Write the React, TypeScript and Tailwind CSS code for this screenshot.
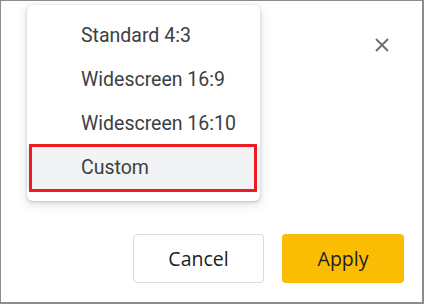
const sizes = ["Standard 4:3", "Widescreen 16:9", "Widescreen 16:10", "Custom"];

export default function App() {
  return (
    <div className="relative flex h-[304px] w-[424px] flex-col border-t border-l border-r-2 border-b-2 border-[#8c8c8c] bg-white font-['Roboto',sans-serif]">
      <div className="flex items-start justify-between">
        <div className="ml-[26px] mt-[4px] w-[233px] rounded-[6px] bg-white pt-[9px] pb-[11px] shadow-[0_1px_3px_rgba(60,64,67,0.25),0_3px_8px_2px_rgba(60,64,67,0.12)]">
          {sizes.map((s) => (
            <div
              key={s}
              className={
                s === "Custom"
                  ? "relative flex h-[44px] items-center bg-[#f1f3f4] pl-[54px] text-[19.5px] text-[#3c4043]"
                  : "flex h-[44px] items-center pl-[54px] text-[19.5px] text-[#3c4043]"
              }
            >
              {s}
              {s === "Custom" && (
                <div className="pointer-events-none absolute top-[-2px] right-[3px] bottom-[-2px] left-[2px] border-[3px] border-[#ed1c24]" />
              )}
            </div>
          ))}
        </div>
        <button type="button" className="mt-[32px] mr-[28px] flex h-[24px] w-[24px] items-center justify-center text-[#6b6b6b]">
          <svg width="14" height="14" viewBox="0 0 14 14" fill="none" stroke="currentColor" strokeWidth="1.8">
            <path d="M1 1L13 13M13 1L1 13" />
          </svg>
        </button>
      </div>
      <div className="mt-auto mb-[19px] mr-[18px] flex justify-end gap-[18px] font-['Open_Sans',sans-serif]">
        <button
          type="button"
          className="h-[49px] w-[131px] rounded-[4px] border border-[#dadce0] bg-white text-[19.5px] text-[#202124]"
        >
          Cancel
        </button>
        <button type="button" className="h-[49px] w-[122px] rounded-[4px] bg-[#fbbc04] text-[19.5px] text-[#202124]">
          Apply
        </button>
      </div>
    </div>
  );
}
